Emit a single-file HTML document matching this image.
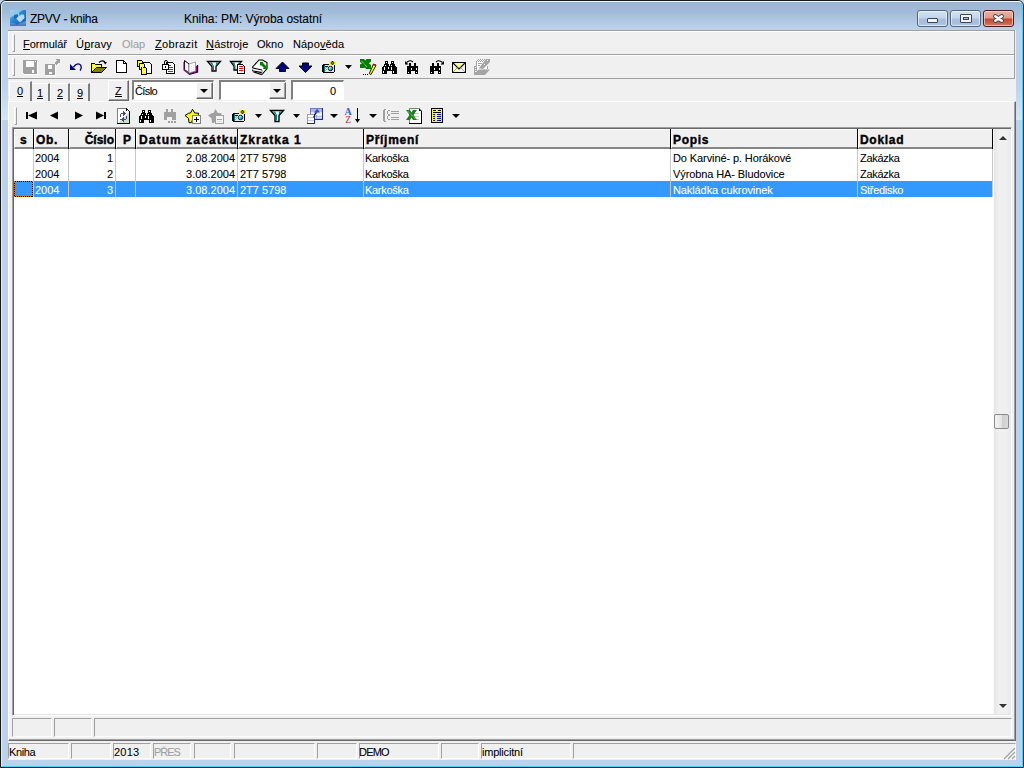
<!DOCTYPE html>
<html><head><meta charset="utf-8">
<style>
*{margin:0;padding:0;box-sizing:border-box}
html,body{width:1024px;height:768px;overflow:hidden;background:#bcd3ec}
body{position:relative;font-family:"Liberation Sans",sans-serif;font-size:11px;color:#000}
.a{position:absolute}
#frame{left:0;top:0;width:1024px;height:768px;border:1px solid #181818;border-radius:6px 6px 0 0;
 background:linear-gradient(#98b3d1 0px,#a3bcd9 12px,#b3cbe5 22px,#bad2ec 29px,#bad2ec 100%)}
#frame2{left:1px;top:1px;width:1022px;height:766px;border-top:1px solid #f4f8fc;border-left:1px solid #e0ebf6;border-right:1px solid #4fd0f2;border-bottom:1px solid #4fd0f2;border-radius:5px 5px 0 0}
#client{left:8px;top:30px;width:1008px;height:730px;background:#f0f0f0}
.t{white-space:nowrap;line-height:1;-webkit-text-stroke:0.08px currentColor}
.band{border:1px solid #a0a0a0;border-left-color:#a0a0a0}
.grip{width:3px;border-left:1px solid #fff;border-top:1px solid #fff;border-right:1px solid #a0a0a0;border-bottom:1px solid #a0a0a0}
u{text-decoration:none;position:relative}u::after{content:"";position:absolute;left:0;right:0;height:1px;background:#000;top:11px}
</style></head><body>
<div id="frame" class="a"></div>
<div id="frame2" class="a"></div>
<div class="a" style="left:2px;top:84px;width:6px;height:36px;background:linear-gradient(#bad2ec,#d6e5f4)"></div>
<div class="a" style="left:1016px;top:84px;width:6px;height:36px;background:linear-gradient(#bad2ec,#d6e5f4)"></div>
<!-- title -->
<div class="a t" style="left:30px;top:13px;font-size:12px;letter-spacing:-0.25px;color:#000">ZPVV - kniha</div>
<div class="a t" style="left:184px;top:13px;font-size:12px;letter-spacing:-0.05px;color:#000">Kniha: PM: Výroba ostatní</div>
<!-- caption buttons -->
<div class="a" style="left:917px;top:10px;width:31px;height:17px;border:1px solid #56657a;border-radius:3px;background:linear-gradient(#d4e2f1 0px,#c3d5ea 7px,#a9c0dc 8px,#a5bede 12px,#bcd2ec 16px);box-shadow:inset 0 0 0 1px rgba(255,255,255,0.55)"></div>
<div class="a" style="left:950px;top:10px;width:31px;height:17px;border:1px solid #56657a;border-radius:3px;background:linear-gradient(#d4e2f1 0px,#c3d5ea 7px,#a9c0dc 8px,#a5bede 12px,#bcd2ec 16px);box-shadow:inset 0 0 0 1px rgba(255,255,255,0.55)"></div>
<div class="a" style="left:983px;top:10px;width:31px;height:17px;border:1px solid #4a1a20;border-radius:3px;background:linear-gradient(#eab0a2 0px,#e29a88 7px,#c4482c 8px,#cc6048 12px,#dc8a72 16px);box-shadow:inset 0 0 0 1px rgba(255,230,220,0.6)"></div>
<div class="a" style="left:927px;top:18px;width:11px;height:5px;border:1px solid #3a4656;border-radius:1px;background:#f4f4f4"></div>
<div class="a" style="left:960px;top:14px;width:12px;height:9px;border:1px solid #3a4656;border-radius:1px;background:#f4f4f4"></div>
<div class="a" style="left:963px;top:17px;width:6px;height:3px;border:1px solid #3a4656;background:#a9c0dc"></div>
<svg class="a" style="left:991px;top:12px" width="16" height="13"><path d="M4.3 4.3 L10.7 8.7 M10.7 4.3 L4.3 8.7" stroke="#3a4656" stroke-width="4.4" stroke-linecap="round"/><path d="M4.3 4.3 L10.7 8.7 M10.7 4.3 L4.3 8.7" stroke="#f8f8f8" stroke-width="2.6" stroke-linecap="round"/></svg>
<div id="client" class="a"></div>
<!-- menu band -->
<div class="a" style="left:8px;top:30px;width:1007px;height:25px;border-top:1px solid #a0a0a0;border-right:1px solid #a0a0a0;border-bottom:1px solid #a0a0a0;box-shadow:inset 1px 1px #fff"></div>
<div class="a" style="left:8px;top:55px;width:1007px;height:24px;border-right:1px solid #a0a0a0;border-bottom:1px solid #a0a0a0;box-shadow:inset 1px 1px #fff"></div>
<div class="a grip" style="left:12px;top:34px;height:18px"></div>
<div class="a grip" style="left:12px;top:58px;height:18px"></div>
<div class="a t" style="left:23px;top:39px;font-size:11px;letter-spacing:0"><u>F</u>ormulář</div>
<div class="a t" style="left:76px;top:39px;font-size:11px;letter-spacing:0.2px">Ú<u>p</u>ravy</div>
<div class="a t" style="left:122px;top:39px;font-size:11px;letter-spacing:0;color:#a0a0a0">Olap</div>
<div class="a t" style="left:155px;top:39px;font-size:11px;letter-spacing:0.35px"><u>Z</u>obrazit</div>
<div class="a t" style="left:206px;top:39px;font-size:11px;letter-spacing:0.2px"><u>N</u>ástroje</div>
<div class="a t" style="left:257px;top:39px;font-size:11px;letter-spacing:0">Okno</div>
<div class="a t" style="left:293px;top:39px;font-size:11px;letter-spacing:0.15px">Nápo<u>v</u>ěda</div>
<!-- tab strip -->
<div class="a" style="left:8px;top:80px;width:1008px;height:21px;"></div>
<div class="a" style="left:9px;top:81px;width:23px;height:21px;border-top:1px solid #fff;border-left:1px solid #fff;border-right:2px solid #808080"></div>
<div class="a" style="left:32px;top:83px;width:18px;height:18px;border-top:1px solid #fff;border-right:2px solid #808080"></div>
<div class="a" style="left:50px;top:83px;width:20px;height:18px;border-top:1px solid #fff;border-left:1px solid #fff;border-right:2px solid #808080"></div>
<div class="a" style="left:70px;top:83px;width:20px;height:18px;border-top:1px solid #fff;border-left:1px solid #fff;border-right:2px solid #808080"></div>
<div class="a t" style="left:17px;top:86px"><u>0</u></div>
<div class="a t" style="left:37px;top:88px"><u>1</u></div>
<div class="a t" style="left:57px;top:88px"><u>2</u></div>
<div class="a t" style="left:77px;top:88px"><u>9</u></div>
<div class="a" style="left:108px;top:80px;width:21px;height:21px;border-top:1px solid #fff;border-left:1px solid #fff;border-right:1px solid #696969;border-bottom:1px solid #696969;box-shadow:inset -1px -1px #a0a0a0"></div>
<div class="a t" style="left:115px;top:86px"><u>Z</u></div>
<div class="a" style="left:132px;top:80px;width:82px;height:20px;border-top:2px solid #808080;border-left:2px solid #808080;border-right:1px solid #fff;border-bottom:1px solid #fff;background:#fff"></div>
<div class="a t" style="left:135px;top:86px;letter-spacing:-0.6px">Číslo</div>
<div class="a" style="left:196px;top:82px;width:17px;height:17px;background:#f0f0f0;border-top:1px solid #fff;border-left:1px solid #fff;border-right:1px solid #696969;border-bottom:1px solid #696969;box-shadow:inset -1px -1px #a0a0a0"></div>
<div class="a" style="left:200px;top:89px;width:0;height:0;border-left:4px solid transparent;border-right:4px solid transparent;border-top:4px solid #000"></div>
<div class="a" style="left:219px;top:80px;width:67px;height:20px;border-top:2px solid #808080;border-left:2px solid #808080;border-right:1px solid #fff;border-bottom:1px solid #fff;background:#fff"></div>
<div class="a" style="left:269px;top:82px;width:17px;height:17px;background:#f0f0f0;border-top:1px solid #fff;border-left:1px solid #fff;border-right:1px solid #696969;border-bottom:1px solid #696969;box-shadow:inset -1px -1px #a0a0a0"></div>
<div class="a" style="left:273px;top:89px;width:0;height:0;border-left:4px solid transparent;border-right:4px solid transparent;border-top:4px solid #000"></div>
<div class="a" style="left:291px;top:80px;width:53px;height:20px;border-top:2px solid #808080;border-left:2px solid #808080;border-right:1px solid #fff;border-bottom:1px solid #fff;background:#fff"></div>
<div class="a t" style="left:330px;top:86px">0</div>
<!-- grid container panel -->
<div class="a" style="left:8px;top:101px;width:1008px;height:640px;border-top:1px solid #fff;border-left:1px solid #fff;border-right:1px solid #696969;border-bottom:1px solid #696969;box-shadow:inset -1px -1px #a0a0a0"></div>
<div class="a grip" style="left:14px;top:107px;height:18px"></div>
<!-- grid -->
<div class="a" style="left:12px;top:127px;width:1000px;height:589px;border-top:1px solid #a0a0a0;border-left:1px solid #a0a0a0;border-right:1px solid #fff;border-bottom:1px solid #fff;background:#fff;box-shadow:inset 1px 1px #696969,inset -1px -1px #e3e3e3"></div>
<div class="a" style="left:14px;top:129px;width:19px;height:20px;background:#f0f0f0;border-top:1px solid #fff;border-left:1px solid #fff;border-bottom:2px solid #868686"></div>
<div class="a" style="left:33px;top:129px;width:1px;height:20px;background:#000"></div>
<div class="a" style="left:34px;top:129px;width:34px;height:20px;background:#f0f0f0;border-top:1px solid #fff;border-left:1px solid #fff;border-bottom:2px solid #868686"></div>
<div class="a" style="left:68px;top:129px;width:1px;height:20px;background:#000"></div>
<div class="a" style="left:69px;top:129px;width:46px;height:20px;background:#f0f0f0;border-top:1px solid #fff;border-left:1px solid #fff;border-bottom:2px solid #868686"></div>
<div class="a" style="left:115px;top:129px;width:1px;height:20px;background:#000"></div>
<div class="a" style="left:116px;top:129px;width:19px;height:20px;background:#f0f0f0;border-top:1px solid #fff;border-left:1px solid #fff;border-bottom:2px solid #868686"></div>
<div class="a" style="left:135px;top:129px;width:1px;height:20px;background:#000"></div>
<div class="a" style="left:136px;top:129px;width:101px;height:20px;background:#f0f0f0;border-top:1px solid #fff;border-left:1px solid #fff;border-bottom:2px solid #868686"></div>
<div class="a" style="left:237px;top:129px;width:1px;height:20px;background:#000"></div>
<div class="a" style="left:238px;top:129px;width:125px;height:20px;background:#f0f0f0;border-top:1px solid #fff;border-left:1px solid #fff;border-bottom:2px solid #868686"></div>
<div class="a" style="left:363px;top:129px;width:1px;height:20px;background:#000"></div>
<div class="a" style="left:364px;top:129px;width:306px;height:20px;background:#f0f0f0;border-top:1px solid #fff;border-left:1px solid #fff;border-bottom:2px solid #868686"></div>
<div class="a" style="left:670px;top:129px;width:1px;height:20px;background:#000"></div>
<div class="a" style="left:671px;top:129px;width:186px;height:20px;background:#f0f0f0;border-top:1px solid #fff;border-left:1px solid #fff;border-bottom:2px solid #868686"></div>
<div class="a" style="left:857px;top:129px;width:1px;height:20px;background:#000"></div>
<div class="a" style="left:858px;top:129px;width:134px;height:20px;background:#f0f0f0;border-top:1px solid #fff;border-left:1px solid #fff;border-bottom:2px solid #868686"></div>
<div class="a" style="left:992px;top:129px;width:1px;height:20px;background:#000"></div>
<div class="a" style="left:33px;top:149px;width:1px;height:48px;background:#c8c8c8"></div>
<div class="a" style="left:68px;top:149px;width:1px;height:48px;background:#c8c8c8"></div>
<div class="a" style="left:115px;top:149px;width:1px;height:48px;background:#c8c8c8"></div>
<div class="a" style="left:135px;top:149px;width:1px;height:48px;background:#c8c8c8"></div>
<div class="a" style="left:237px;top:149px;width:1px;height:48px;background:#c8c8c8"></div>
<div class="a" style="left:363px;top:149px;width:1px;height:48px;background:#c8c8c8"></div>
<div class="a" style="left:670px;top:149px;width:1px;height:48px;background:#c8c8c8"></div>
<div class="a" style="left:857px;top:149px;width:1px;height:48px;background:#c8c8c8"></div>
<div class="a" style="left:992px;top:149px;width:1px;height:48px;background:#c8c8c8"></div>
<div class="a" style="left:34px;top:181px;width:958px;height:16px;background:#3399ff"></div>
<div class="a" style="left:33px;top:181px;width:1px;height:16px;background:#c8c8c8"></div>
<div class="a" style="left:68px;top:181px;width:1px;height:16px;background:#c8c8c8"></div>
<div class="a" style="left:115px;top:181px;width:1px;height:16px;background:#c8c8c8"></div>
<div class="a" style="left:135px;top:181px;width:1px;height:16px;background:#c8c8c8"></div>
<div class="a" style="left:237px;top:181px;width:1px;height:16px;background:#c8c8c8"></div>
<div class="a" style="left:363px;top:181px;width:1px;height:16px;background:#c8c8c8"></div>
<div class="a" style="left:670px;top:181px;width:1px;height:16px;background:#c8c8c8"></div>
<div class="a" style="left:857px;top:181px;width:1px;height:16px;background:#c8c8c8"></div>
<svg class="a" style="left:14px;top:181px" width="19" height="16" shape-rendering="crispEdges"><rect x="0.5" y="0.5" width="18" height="15" fill="#3399ff" stroke="#d87000"/><rect x="0.5" y="0.5" width="18" height="15" fill="none" stroke="#000" stroke-dasharray="1 1"/></svg>
<div class="a t" style="left:20px;top:134px;font-weight:bold;font-size:12px;-webkit-text-stroke:0.4px #000;letter-spacing:0.7px">s</div>
<div class="a t" style="left:36px;top:134px;font-weight:bold;font-size:12px;-webkit-text-stroke:0.4px #000;letter-spacing:0.7px">Ob.</div>
<div class="a t" style="right:910px;top:134px;font-weight:bold;font-size:12px;-webkit-text-stroke:0.4px #000;letter-spacing:0px">Číslo</div>
<div class="a t" style="left:123px;top:134px;font-weight:bold;font-size:12px;-webkit-text-stroke:0.4px #000;letter-spacing:0.7px">P</div>
<div class="a t" style="left:139px;top:134px;font-weight:bold;font-size:12px;-webkit-text-stroke:0.4px #000;letter-spacing:1.1px">Datum začátku</div>
<div class="a t" style="left:240px;top:134px;font-weight:bold;font-size:12px;-webkit-text-stroke:0.4px #000;letter-spacing:1px">Zkratka 1</div>
<div class="a t" style="left:366px;top:134px;font-weight:bold;font-size:12px;-webkit-text-stroke:0.4px #000;letter-spacing:0.7px">Příjmení</div>
<div class="a t" style="left:673px;top:134px;font-weight:bold;font-size:12px;-webkit-text-stroke:0.4px #000;letter-spacing:0.7px">Popis</div>
<div class="a t" style="left:860px;top:134px;font-weight:bold;font-size:12px;-webkit-text-stroke:0.4px #000;letter-spacing:0.7px">Doklad</div>
<div class="a t" style="left:35px;top:153px;color:#000">2004</div>
<div class="a t" style="right:911px;top:153px;color:#000">1</div>
<div class="a t" style="right:789px;top:153px;color:#000">2.08.2004</div>
<div class="a t" style="left:240px;top:153px;color:#000">2T7 5798</div>
<div class="a t" style="left:365px;top:153px;color:#000;letter-spacing:-0.3px">Karkoška</div>
<div class="a t" style="left:673px;top:153px;color:#000;letter-spacing:-0.1px">Do Karviné- p. Horákové</div>
<div class="a t" style="left:860px;top:153px;color:#000;letter-spacing:-0.3px">Zakázka</div>
<div class="a t" style="left:35px;top:169px;color:#000">2004</div>
<div class="a t" style="right:911px;top:169px;color:#000">2</div>
<div class="a t" style="right:789px;top:169px;color:#000">3.08.2004</div>
<div class="a t" style="left:240px;top:169px;color:#000">2T7 5798</div>
<div class="a t" style="left:365px;top:169px;color:#000;letter-spacing:-0.3px">Karkoška</div>
<div class="a t" style="left:673px;top:169px;color:#000;letter-spacing:-0.1px">Výrobna HA- Bludovice</div>
<div class="a t" style="left:860px;top:169px;color:#000;letter-spacing:-0.3px">Zakázka</div>
<div class="a t" style="left:35px;top:185px;color:#fff">2004</div>
<div class="a t" style="right:911px;top:185px;color:#fff">3</div>
<div class="a t" style="right:789px;top:185px;color:#fff">3.08.2004</div>
<div class="a t" style="left:240px;top:185px;color:#fff">2T7 5798</div>
<div class="a t" style="left:365px;top:185px;color:#fff;letter-spacing:-0.3px">Karkoška</div>
<div class="a t" style="left:673px;top:185px;color:#fff;letter-spacing:-0.1px">Nakládka cukrovinek</div>
<div class="a t" style="left:860px;top:185px;color:#fff;letter-spacing:-0.3px">Středisko</div>
<div class="a" style="left:993px;top:129px;width:18px;height:585px;background:linear-gradient(90deg,#e6e6e6,#f0f0f0 30%,#f0f0f0 70%,#e8e8e8);border-left:1px solid #fafafa"></div>
<div class="a" style="left:999px;top:136px;width:0;height:0;border-left:4px solid transparent;border-right:4px solid transparent;border-bottom:4px solid #333"></div>
<div class="a" style="left:999px;top:704px;width:0;height:0;border-left:4px solid transparent;border-right:4px solid transparent;border-top:4px solid #333"></div>
<div class="a" style="left:994px;top:414px;width:15px;height:15px;border:1px solid #8a8a8a;border-radius:2px;background:linear-gradient(90deg,#f4f4f4,#e4e4e4 50%,#cfcfcf 55%,#dadada)"></div>
<!-- bottom boxes -->
<div class="a" style="left:12px;top:718px;width:40px;height:19px;border-top:1px solid #a0a0a0;border-left:1px solid #a0a0a0;border-right:1px solid #fff;border-bottom:1px solid #fff"></div>
<div class="a" style="left:54px;top:718px;width:38px;height:19px;border-top:1px solid #a0a0a0;border-left:1px solid #a0a0a0;border-right:1px solid #fff;border-bottom:1px solid #fff"></div>
<div class="a" style="left:94px;top:718px;width:918px;height:19px;border-top:1px solid #a0a0a0;border-left:1px solid #a0a0a0;border-right:1px solid #fff;border-bottom:1px solid #fff"></div>
<!-- status bar -->
<div class="a" style="left:8px;top:741px;width:1007px;height:2px;background:#f0f0f0"></div>
<div class="a" style="left:8px;top:743px;width:61px;height:16px;border-top:1px solid #a0a0a0;border-left:1px solid #a0a0a0;border-right:1px solid #fff;border-bottom:1px solid #fff"></div>
<div class="a t" style="left:9px;top:747px;color:#000;letter-spacing:-0.4px">Kniha</div>
<div class="a" style="left:71px;top:743px;width:40px;height:16px;border-top:1px solid #a0a0a0;border-left:1px solid #a0a0a0;border-right:1px solid #fff;border-bottom:1px solid #fff"></div>
<div class="a" style="left:113px;top:743px;width:38px;height:16px;border-top:1px solid #a0a0a0;border-left:1px solid #a0a0a0;border-right:1px solid #fff;border-bottom:1px solid #fff"></div>
<div class="a t" style="left:114px;top:747px;color:#000;letter-spacing:0.2px">2013</div>
<div class="a" style="left:153px;top:743px;width:38px;height:16px;border-top:1px solid #a0a0a0;border-left:1px solid #a0a0a0;border-right:1px solid #fff;border-bottom:1px solid #fff"></div>
<div class="a t" style="left:154px;top:747px;color:#a0a0a0;letter-spacing:-1px">PŘES</div>
<div class="a" style="left:194px;top:743px;width:37px;height:16px;border-top:1px solid #a0a0a0;border-left:1px solid #a0a0a0;border-right:1px solid #fff;border-bottom:1px solid #fff"></div>
<div class="a" style="left:234px;top:743px;width:81px;height:16px;border-top:1px solid #a0a0a0;border-left:1px solid #a0a0a0;border-right:1px solid #fff;border-bottom:1px solid #fff"></div>
<div class="a" style="left:317px;top:743px;width:40px;height:16px;border-top:1px solid #a0a0a0;border-left:1px solid #a0a0a0;border-right:1px solid #fff;border-bottom:1px solid #fff"></div>
<div class="a" style="left:359px;top:743px;width:80px;height:16px;border-top:1px solid #a0a0a0;border-left:1px solid #a0a0a0;border-right:1px solid #fff;border-bottom:1px solid #fff"></div>
<div class="a t" style="left:359px;top:747px;color:#000;letter-spacing:-0.8px">DEMO</div>
<div class="a" style="left:441px;top:743px;width:38px;height:16px;border-top:1px solid #a0a0a0;border-left:1px solid #a0a0a0;border-right:1px solid #fff;border-bottom:1px solid #fff"></div>
<div class="a" style="left:481px;top:743px;width:90px;height:16px;border-top:1px solid #a0a0a0;border-left:1px solid #a0a0a0;border-right:1px solid #fff;border-bottom:1px solid #fff"></div>
<div class="a t" style="left:482px;top:747px;color:#000;letter-spacing:-0.2px">implicitní</div>
<div class="a" style="left:573px;top:743px;width:443px;height:16px;border-top:1px solid #a0a0a0;border-left:1px solid #a0a0a0;border-right:1px solid #fff;border-bottom:1px solid #fff"></div>
<svg class="a" style="left:1003px;top:748px" width="13" height="12"><g stroke="#a0a0a0" stroke-width="1.2"><line x1="12" y1="0" x2="1" y2="11"/><line x1="12" y1="4" x2="5" y2="11"/><line x1="12" y1="8" x2="9" y2="11"/></g><g stroke="#fff" stroke-width="1"><line x1="13" y1="1" x2="2" y2="12"/><line x1="13" y1="5" x2="6" y2="12"/><line x1="13" y1="9" x2="10" y2="12"/></g></svg>


<!--ICONS-->
<svg class="a" style="left:0;top:0" width="1024" height="768" shape-rendering="crispEdges">
<!-- save disabled -->
<g>
<rect x="24" y="61" width="14" height="14" fill="#fff"/>
<rect x="23" y="60" width="14" height="14" fill="#a0a0a0"/>
<rect x="23" y="73" width="1" height="1" fill="#f0f0f0"/>
<rect x="26" y="61" width="8" height="6" fill="#fff"/>
<rect x="35" y="61" width="1" height="1" fill="#fff"/>
<rect x="32" y="70" width="2" height="3" fill="#fff"/>
</g>
<!-- save as disabled -->
<g>
<rect x="46" y="65" width="10" height="11" fill="#fff"/>
<rect x="45" y="64" width="10" height="11" fill="#a0a0a0"/>
<rect x="48" y="65" width="4" height="4" fill="#fff"/>
<rect x="49" y="72" width="3" height="2" fill="#fff"/>
<polygon points="55,59 60,59 60,64" fill="#a0a0a0"/>
<polygon points="54,63 57,60 59,62 56,65" fill="#a0a0a0"/>
</g>
<!-- undo -->
<g shape-rendering="auto">
<polygon points="70,64 70,70 76,70" fill="#000080"/>
<path d="M73.5 67 Q77 62.5 80 64.5 Q82.5 67 80 70.5" fill="none" stroke="#000080" stroke-width="1.3"/>
</g>
<!-- open folder -->
<g>
<polygon points="91.5,72.5 91.5,63.5 94.5,63.5 95.5,64.5 101.5,64.5 101.5,67" fill="#ffff00" stroke="#000" stroke-width="1"/>
<rect x="93" y="65" width="2" height="2" fill="#fff"/>
<polygon points="91.5,72.5 96.5,67.5 106.5,67.5 101.5,72.5" fill="#808000" stroke="#000" stroke-width="1" shape-rendering="auto"/>
<path d="M99 62.5 Q102 59.5 105 62" fill="none" stroke="#000" stroke-width="1.2" shape-rendering="auto"/>
<polygon points="103.5,62 107,62 105.2,64.5" fill="#000" shape-rendering="auto"/>
</g>
<!-- new doc -->
<polygon points="116.5,60.5 123.5,60.5 126.5,63.5 126.5,72.5 116.5,72.5" fill="#fff" stroke="#000" stroke-width="1"/>
<polyline points="123.5,60.5 123.5,63.5 126.5,63.5" fill="none" stroke="#000"/>
<!-- copy docs -->
<g>
<polygon points="143.5,62.5 149.5,62.5 151.5,64.5 151.5,73.5 143.5,73.5" fill="#fff" stroke="#000"/>
<polygon points="137.5,60.5 141.5,60.5 142.5,61.5 142.5,66.5 137.5,66.5" fill="#ffff00" stroke="#000"/>
<polygon points="139.5,63.5 143.5,63.5 144.5,64.5 144.5,69.5 139.5,69.5" fill="#ffff00" stroke="#000"/>
<polygon points="141.5,67.5 145.5,67.5 146.5,68.5 146.5,74.5 141.5,74.5" fill="#ffff00" stroke="#000"/>
<rect x="139" y="62" width="1" height="1" fill="#fff"/><rect x="138" y="63" width="1" height="1" fill="#fff"/><rect x="140" y="64" width="1" height="1" fill="#fff"/>
<rect x="141" y="65" width="1" height="1" fill="#fff"/><rect x="140" y="66" width="1" height="1" fill="#fff"/><rect x="142" y="67" width="1" height="1" fill="#fff"/>
<rect x="143" y="69" width="1" height="1" fill="#fff"/><rect x="142" y="70" width="1" height="1" fill="#fff"/><rect x="144" y="71" width="1" height="1" fill="#fff"/><rect x="143" y="72" width="1" height="1" fill="#fff"/><rect x="145" y="72" width="1" height="1" fill="#fff"/>
</g>
<!-- lock doc -->
<g>
<polygon points="166.5,62.5 172.5,62.5 174.5,64.5 174.5,73.5 166.5,73.5" fill="#fff" stroke="#000"/>
<rect x="168" y="65" width="3" height="1" fill="#f00"/>
<rect x="168" y="67" width="5" height="1" fill="#f00"/>
<rect x="168" y="69" width="5" height="1" fill="#f00"/>
<rect x="168" y="71" width="5" height="1" fill="#f00"/>
<path d="M164.5 64.5 V62 Q164.5 60.5 166 60.5 Q167.5 60.5 167.5 62 V64.5" fill="none" stroke="#000" stroke-width="1" shape-rendering="auto"/>
<rect x="162.5" y="64.5" width="6" height="5" fill="#fff" stroke="#000"/>
<rect x="165" y="66" width="1" height="2" fill="#000"/>
</g>
<!-- book -->
<g shape-rendering="auto">
<polygon points="184.5,60.5 189,64 189,73 184.5,69.5" fill="#fff" stroke="#000" stroke-width="1"/>
<polygon points="189,64 195.5,62 195.5,71 189,73" fill="#fff" stroke="#a0a0a0" stroke-width="1"/>
<polyline points="197.5,65 197.5,72 189,74.5" fill="none" stroke="#000" stroke-width="1.3"/>
<polyline points="184,62 184,70 188.8,74 196.5,71.5 196.5,66" fill="none" stroke="#800080" stroke-width="1.1"/>
</g>
<rect x="191" y="66" width="1" height="1" fill="#ff0"/><rect x="193" y="65" width="1" height="1" fill="#ff0"/>
<rect x="191" y="68" width="1" height="1" fill="#ff0"/><rect x="193" y="67" width="1" height="1" fill="#ff0"/>
<rect x="191" y="70" width="1" height="1" fill="#ff0"/><rect x="193" y="69" width="1" height="1" fill="#ff0"/>
<!-- filter -->
<g shape-rendering="auto">
<polygon points="207.5,61.5 220.5,61.5 216,66.5 216,71 212,71 212,66.5" fill="#fff" stroke="#000" stroke-width="1.3"/>
<polygon points="209.5,62.5 212,62.5 214,66 214,70 213,70 213,66" fill="#008080"/>
<polygon points="216,62.5 219,62.5 215.5,66 215.5,70 215,70" fill="#008080"/>
</g>
<!-- filter doc -->
<g shape-rendering="auto">
<polygon points="230.5,61.5 241.5,61.5 237.5,66 237.5,70 234,70 234,66" fill="#fff" stroke="#000" stroke-width="1.3"/>
<polygon points="232,62.5 234.5,62.5 235.5,66 235.5,69 234.8,69 234.8,66" fill="#008080"/>
<polygon points="238.5,62.5 240.5,62.5 237,66 237,69" fill="#008080"/>
</g>
<polygon points="237.5,64.5 242.5,64.5 244.5,66.5 244.5,73.5 237.5,73.5" fill="#fff" stroke="#000"/>
<rect x="239" y="66" width="4" height="1" fill="#f00"/><rect x="239" y="68" width="4" height="1" fill="#f00"/><rect x="239" y="70" width="4" height="1" fill="#f00"/>
<!-- stack with green arrow -->
<g shape-rendering="auto">
<polygon points="252.5,67 259,60 262.5,60 267,62.5 267,68.5 262,74.5 252.5,71.5" fill="#fff"/>
<polyline points="252.5,67 259,60 262.5,60 267,62.5 267,68.5 262,74.5" fill="none" stroke="#000" stroke-width="1.1"/>
<polyline points="252.5,66.8 253,68 262,70" fill="none" stroke="#000" stroke-width="1.1"/>
<polyline points="252.5,69.6 253,71 262,72.6" fill="none" stroke="#000" stroke-width="1.1"/>
<polyline points="253.5,72 262,74.6" fill="none" stroke="#000" stroke-width="1.1"/>
<line x1="262" y1="70" x2="262" y2="74.5" stroke="#808080" stroke-width="0.9"/>
<rect x="260" y="62" width="3.2" height="3.4" fill="#008000"/>
<line x1="261.5" y1="63.5" x2="265" y2="67" stroke="#008000" stroke-width="2.6"/>
<polygon points="266.8,64.8 266.8,69 262.6,69" fill="#008000"/>
</g>
<!-- up arrow -->
<polygon points="282.5,62 289,68.5 285.5,68.5 285.5,71.5 279.5,71.5 279.5,68.5 276,68.5" fill="#000080" stroke="#000" stroke-width="1" shape-rendering="auto"/>
<!-- down arrow -->
<polygon points="302.5,63 308.5,63 308.5,66 312,66 305.5,72.5 299,66 302.5,66" fill="#000080" stroke="#000" stroke-width="1" shape-rendering="auto"/>
<!-- camera -->
<use href="#cam" x="322" y="61"/>
<polygon points="345,65 352,65 348.5,69" fill="#000" shape-rendering="auto"/>
<!-- excel X pencil -->
<g shape-rendering="auto">
<polygon points="360,59 364,59 365.2,60.5 366.5,59 371,59 371,61.5 368.8,63.5 371,65 371,69 366,69 365,67.5 364,68 360,68 360,64.5 362,63.2 360,62" fill="#008000"/>
<line x1="361.5" y1="61" x2="367.5" y2="67.5" stroke="#fff" stroke-width="0.8" stroke-dasharray="1,0.8"/>
<polygon points="373.5,64 376,65.5 371,74.5 369.3,73.5" fill="#ff0" stroke="#000" stroke-width="0.9"/>
<rect x="373.3" y="64" width="2.4" height="1.6" fill="#c00000"/>
</g>
<rect x="363" y="74" width="1" height="1" fill="#000"/><rect x="365" y="74" width="1" height="1" fill="#000"/><rect x="367" y="74" width="1" height="1" fill="#000"/>
</svg>
<svg class="a" style="left:0;top:0" width="1024" height="768" shape-rendering="crispEdges">
<defs>
<g id="bino">
<rect x="3" y="0" width="3" height="3" fill="#000"/><rect x="9" y="0" width="3" height="3" fill="#000"/>
<rect x="2" y="3" width="5" height="2" fill="#000"/><rect x="8" y="3" width="5" height="2" fill="#000"/>
<rect x="1" y="5" width="13" height="1" fill="#000"/>
<rect x="0" y="6" width="15" height="4" fill="#000"/>
<rect x="0" y="10" width="5" height="3" fill="#000"/><rect x="10" y="10" width="5" height="3" fill="#000"/>
<rect x="4" y="1" width="1" height="1" fill="#fff"/><rect x="10" y="1" width="1" height="1" fill="#fff"/>
<rect x="3" y="4" width="1" height="1" fill="#fff"/><rect x="9" y="4" width="1" height="1" fill="#fff"/>
<rect x="2" y="6" width="1" height="3" fill="#fff"/><rect x="6" y="6" width="1" height="2" fill="#fff"/><rect x="9" y="6" width="1" height="3" fill="#fff"/>
<rect x="1" y="10" width="1" height="2" fill="#fff"/><rect x="11" y="10" width="1" height="2" fill="#fff"/>
</g>
<linearGradient id="lensg" x1="0" y1="0" x2="1" y2="1"><stop offset="0.2" stop-color="#fff"/><stop offset="0.55" stop-color="#00e0ff"/><stop offset="1" stop-color="#0000ff"/></linearGradient>
<g id="cam">
<rect x="1" y="3" width="11" height="9" fill="#000"/>
<rect x="0" y="4" width="13" height="7" fill="#000"/>
<rect x="2" y="4" width="1" height="7" fill="#008080"/>
<rect x="3" y="4" width="9" height="7" fill="#e8e4d8"/>
<rect x="3" y="5" width="1" height="1" fill="#a0a0a0"/><rect x="4" y="6" width="1" height="1" fill="#a0a0a0"/><rect x="3" y="7" width="1" height="1" fill="#a0a0a0"/><rect x="4" y="8" width="1" height="1" fill="#a0a0a0"/><rect x="3" y="9" width="1" height="1" fill="#a0a0a0"/>
<rect x="3" y="5" width="3" height="1" fill="#000"/>
<circle cx="8.5" cy="7.5" r="2.2" fill="url(#lensg)" stroke="#000" stroke-width="0.9" shape-rendering="auto"/>
<rect x="7" y="0" width="7" height="4" fill="#ffff00"/>
<circle cx="10.5" cy="2" r="1.4" fill="none" stroke="#000" stroke-width="0.8" shape-rendering="auto"/>
<rect x="10" y="0" width="1" height="4" fill="#000" opacity="0.5"/>
</g>
<g id="binos">
<rect x="2" y="0" width="2" height="3" fill="#000"/><rect x="7" y="0" width="2" height="3" fill="#000"/>
<rect x="0" y="3" width="11" height="5" fill="#000"/>
<rect x="0" y="8" width="4" height="3" fill="#000"/><rect x="8" y="8" width="3" height="3" fill="#000"/>
<rect x="4" y="5" width="1" height="2" fill="#fff"/><rect x="9" y="5" width="1" height="2" fill="#fff"/>
<rect x="1" y="9" width="1" height="1" fill="#fff"/><rect x="9" y="9" width="1" height="1" fill="#fff"/>
</g>
</defs>
<use href="#bino" x="382" y="61"/>
<use href="#binos" x="407" y="63"/>
<path d="M413 62 Q410 59.3 406.5 62.5" fill="none" stroke="#000" stroke-width="1.1" shape-rendering="auto"/>
<polygon points="405,61 405,64.5 408.5,64.5" fill="#000" shape-rendering="auto"/>
<use href="#binos" x="430" y="63"/>
<path d="M436 62 Q439 59.3 442.5 62.5" fill="none" stroke="#000" stroke-width="1.1" shape-rendering="auto"/>
<polygon points="444,61 444,64.5 440.5,64.5" fill="#000" shape-rendering="auto"/>
<!-- envelope -->
<rect x="452.5" y="62.5" width="13" height="10" fill="#f4f4f4" stroke="#000"/>
<rect x="452" y="72" width="14" height="1" fill="#000"/>
<polygon points="453,63 465,63 459,69" fill="#ffff80" shape-rendering="auto"/>
<polyline points="453,63 459,69 465,63" fill="none" stroke="#000" stroke-width="1.1" shape-rendering="auto"/>
<polyline points="453,72 457.5,67.5" stroke="#a0a000" stroke-width="0.8" shape-rendering="auto"/>
<polyline points="465,72 460.5,67.5" stroke="#a0a000" stroke-width="0.8" shape-rendering="auto"/>
<!-- gray notepad -->
<polygon points="477,62 485,62 480,68 477,70" fill="#fff"/><rect x="482" y="66" width="5" height="3" fill="#fff"/>
<g fill="#a4a4a4">
<rect x="474" y="66" width="2" height="9"/>
<rect x="476" y="61" width="1" height="10"/>
<rect x="478" y="59" width="1" height="1"/><rect x="480" y="59" width="1" height="1"/><rect x="482" y="59" width="1" height="1"/><rect x="484" y="59" width="1" height="1"/>
<rect x="477" y="60" width="1" height="1"/><rect x="479" y="60" width="1" height="1"/><rect x="481" y="60" width="1" height="1"/><rect x="483" y="60" width="1" height="1"/>
<rect x="478" y="61" width="1" height="1"/><rect x="480" y="61" width="1" height="1"/><rect x="482" y="61" width="1" height="1"/>
<rect x="478" y="63" width="4" height="1"/><rect x="478" y="65" width="2" height="1"/>
<polygon points="479,68 486,59 490,59 490,62 483,69" shape-rendering="auto"/>
<polygon points="474,75 485,75 490,69.5 479,69.5 476,72 474,72" shape-rendering="auto"/>
<rect x="487" y="66" width="1" height="3"/>
</g>
<rect x="475" y="67" width="1" height="1" fill="#fff"/><rect x="475" y="69" width="1" height="1" fill="#fff"/><rect x="475" y="71" width="1" height="1" fill="#fff"/>
<rect x="487" y="60" width="1" height="1" fill="#fff"/><rect x="484" y="64" width="1" height="1" fill="#fff"/>
<!-- NAV TOOLBAR -->
<rect x="26" y="112" width="2" height="7" fill="#000"/>
<polygon points="28,115.5 37,111.5 37,119.5" fill="#000" shape-rendering="auto"/>
<polygon points="50,115.5 58,111.5 58,119.5" fill="#000" shape-rendering="auto"/>
<polygon points="75,111.5 83,115.5 75,119.5" fill="#000" shape-rendering="auto"/>
<polygon points="96,111.5 104,115.5 96,119.5" fill="#000" shape-rendering="auto"/>
<rect x="104" y="112" width="2" height="7" fill="#000"/>
<!-- refresh doc -->
<rect x="117" y="108" width="13" height="16" fill="#fff"/>
<polygon points="118,123 129,123 129,112" fill="#c8e4c8"/>
<rect x="117" y="108" width="9" height="1" fill="#808080"/><rect x="117" y="108" width="1" height="15" fill="#808080"/>
<rect x="117" y="123" width="13" height="1" fill="#000"/><rect x="129" y="111" width="1" height="13" fill="#000"/>
<polygon points="126,108 126,111 129,111" fill="#000"/><rect x="127" y="110" width="1" height="1" fill="#fff"/>
<g fill="#4a4a80">
<rect x="121" y="113" width="3" height="1"/><rect x="120" y="114" width="1" height="3"/>
<polygon points="123,111 126.5,113.5 123,116"/>
<rect x="123" y="119" width="3" height="1"/><rect x="126" y="116" width="1" height="3"/>
<polygon points="124,117 120.5,119.5 124,122"/>
</g>
<use href="#bino" x="139" y="110"/>
<!-- gray binoculars -->
<g fill="#a0a0a0">
<rect x="166" y="109" width="2" height="3"/><rect x="171" y="109" width="2" height="3"/>
<rect x="164" y="112" width="12" height="8"/>
</g>
<rect x="167" y="117" width="5" height="3" fill="#f0f0f0"/>
<rect x="168" y="121" width="2" height="2" fill="#a0a0a0"/><rect x="171" y="121" width="2" height="2" fill="#a0a0a0"/><rect x="174" y="121" width="2" height="2" fill="#a0a0a0"/>
<!-- star plus -->
<polygon points="192.5,109.3 194.8,113 198.6,113.2 198,116 193.5,117.5 191.3,122.7 189,122.7 188.5,118.3 185,115.5 188.5,113.3 190.5,113" fill="#ffff00" stroke="#000" stroke-width="1" shape-rendering="auto"/>
<rect x="192.5" y="115.5" width="8" height="8" fill="#fff" stroke="#808080"/>
<rect x="194" y="119" width="5" height="1" fill="#000"/><rect x="196" y="117" width="1" height="5" fill="#000"/>
<!-- gray star minus -->
<polygon points="215.5,109 217.8,113 221.6,113.2 221,116 216.5,117.5 214.3,123 212,123 211.5,118.3 208,115.5 211.5,113.3 213.5,113" fill="#a0a0a0" shape-rendering="auto"/>
<rect x="215.5" y="115.5" width="8" height="8" fill="#f4f4f4" stroke="#a0a0a0"/>
<rect x="217" y="119" width="5" height="1" fill="#a0a0a0"/><rect x="217" y="121" width="5" height="1" fill="#e0e0e0"/>
<!-- camera nav -->
<use href="#cam" x="232" y="110"/>
<polygon points="255,114 262,114 258.5,118" fill="#000" shape-rendering="auto"/>
<!-- filter nav -->
<g shape-rendering="auto">
<polygon points="270.5,110.5 283.5,110.5 279,115.5 279,121.5 275,121.5 275,115.5" fill="#fff" stroke="#000" stroke-width="1.4"/>
<polygon points="272.5,111.5 275,111.5 277,115 277,120.5 276,120.5 276,115" fill="#008080"/>
<polygon points="279,111.5 282,111.5 278.5,115 278.5,120.5 278,120.5" fill="#008080"/>
</g>
<polygon points="293,114 300,114 296.5,118" fill="#000" shape-rendering="auto"/>
<!-- table icon -->
<rect x="310" y="108" width="13" height="12" fill="#dfe8fb"/>
<rect x="310" y="108" width="13" height="1" fill="#6f7fc0"/><rect x="310" y="108" width="1" height="12" fill="#6f7fc0"/>
<rect x="311" y="109" width="11" height="3" fill="#b4b4d4"/>
<rect x="322" y="108" width="1" height="12" fill="#28287c"/><rect x="310" y="119" width="13" height="1" fill="#28287c"/>
<rect x="316" y="112" width="1" height="7" fill="#90a8e0"/>
<rect x="311" y="114" width="11" height="1" fill="#ffffff"/><rect x="311" y="116" width="11" height="1" fill="#a8c0f0"/><rect x="311" y="118" width="11" height="1" fill="#a8c0f0"/>
<rect x="307" y="114" width="8" height="10" fill="#fff"/>
<rect x="307" y="114" width="1" height="10" fill="#a0a0a0"/><rect x="307" y="114" width="8" height="1" fill="#a0a0a0"/>
<rect x="307" y="123" width="8" height="1" fill="#28287c"/><rect x="314" y="114" width="1" height="10" fill="#28287c"/>
<rect x="308" y="117" width="6" height="1" fill="#b8c8f0"/><rect x="308" y="120" width="6" height="1" fill="#b8c8f0"/>
<g shape-rendering="auto">
<line x1="313.5" y1="117.5" x2="316.8" y2="111" stroke="#1a1a60" stroke-width="1.3"/>
<polygon points="314,112.5 317.2,108.8 320,112.5" fill="#3a50c0"/>
</g>
<polygon points="330,114 338,114 334,118" fill="#000" shape-rendering="auto"/>
<!-- AZ sort -->
<text x="344.6" y="115.2" font-family="Liberation Serif" font-weight="bold" font-size="10" fill="#3a5cc8" shape-rendering="auto">A</text>
<text x="345.2" y="122.8" font-family="Liberation Serif" font-size="9.5" fill="#b03a3a">Z</text>
<rect x="357" y="108" width="1" height="14" fill="#000"/>
<polygon points="355,119 360,119 357.5,123" fill="#000" shape-rendering="auto"/>
<polygon points="369,114 377,114 373,118" fill="#000" shape-rendering="auto"/>
<!-- gray tree list -->
<g fill="#a0a0a0">
<rect x="383" y="110" width="2" height="11"/><rect x="384" y="109" width="2" height="1"/><rect x="384" y="121" width="2" height="1"/>
<rect x="387" y="111" width="1" height="3"/><rect x="388" y="110" width="2" height="1"/><rect x="388" y="114" width="2" height="1"/>
<rect x="387" y="116" width="1" height="3"/><rect x="388" y="115" width="2" height="1"/><rect x="388" y="119" width="2" height="1"/>
<rect x="391" y="111" width="8" height="1"/><rect x="391" y="113" width="8" height="1"/><rect x="391" y="117" width="8" height="1"/><rect x="391" y="119" width="8" height="1"/>
</g>
<!-- excel doc -->
<rect x="409" y="108" width="13" height="16" fill="#fff"/>
<rect x="409" y="108" width="10" height="1" fill="#808080"/><rect x="409" y="108" width="1" height="15" fill="#808080"/>
<rect x="409" y="123" width="13" height="1" fill="#000"/><rect x="421" y="111" width="1" height="13" fill="#000"/>
<polygon points="419,108 422,111 419,111" fill="#000" shape-rendering="auto"/>
<rect x="413" y="113" width="6" height="1" fill="#c8c8c8"/><rect x="413" y="116" width="6" height="1" fill="#c8c8c8"/><rect x="413" y="119" width="6" height="1" fill="#c8c8c8"/>
<defs><pattern id="chk" width="2" height="2" patternUnits="userSpaceOnUse"><rect width="1" height="1" fill="#008000"/><rect x="1" y="1" width="1" height="1" fill="#008000"/><rect x="1" y="0" width="1" height="1" fill="#fff"/><rect x="0" y="1" width="1" height="1" fill="#fff"/></pattern></defs>
<g shape-rendering="auto">
<polygon points="406,110 410,110 411.5,112.5 413,110 417,110 413.5,115 417,120 413,120 411.5,117.5 410,120 406,120 409.5,115" fill="#1a801a"/><line x1="407.5" y1="111" x2="415.5" y2="119" stroke="#fff" stroke-width="0.7" stroke-dasharray="1 1"/>
</g>
<!-- yellow table -->
<rect x="431" y="108" width="12" height="15" fill="#000"/>
<rect x="432" y="109" width="10" height="13" fill="#ffff00"/>
<rect x="433" y="110" width="3" height="1" fill="#000"/><rect x="438" y="110" width="3" height="1" fill="#000"/>
<rect x="433" y="112" width="8" height="1" fill="#000"/>
<rect x="433" y="114" width="2" height="1" fill="#0000ff"/><rect x="437" y="114" width="4" height="1" fill="#0000ff"/>
<rect x="433" y="116" width="2" height="1" fill="#0000ff"/><rect x="437" y="116" width="4" height="1" fill="#0000ff"/>
<rect x="433" y="118" width="2" height="1" fill="#0000ff"/><rect x="437" y="118" width="4" height="1" fill="#0000ff"/>
<rect x="433" y="120" width="2" height="1" fill="#0000ff"/><rect x="437" y="120" width="4" height="1" fill="#0000ff"/>
<polygon points="452,114 460,114 456,118" fill="#000" shape-rendering="auto"/>
<!-- title icon -->
<defs><linearGradient id="tig" x1="0" y1="0" x2="1" y2="1"><stop offset="0" stop-color="#7cc0ee"/><stop offset="0.45" stop-color="#2a82cc"/><stop offset="1" stop-color="#0e5aa8"/></linearGradient>
<linearGradient id="tib" x1="0" y1="0" x2="0" y2="1"><stop offset="0" stop-color="#6aa0d8"/><stop offset="1" stop-color="#4a70b8"/></linearGradient></defs>
<g shape-rendering="auto">
<rect x="10" y="10" width="16" height="16" fill="url(#tig)"/>
<polygon points="10,10 23,10 19,12.5 18,15 13,16 10,18" fill="#a8d4f2" opacity="0.75"/>
<polygon points="13.5,16 17.5,14 19,13 19.5,16 21,14.5 24,14.5 24.5,18 20,22.5 16.5,19" fill="#b4dcf6"/>
<polygon points="14,15 18,14 18.5,16 16,19 14,18" fill="#1a68b8"/>
<polygon points="10,23 14,23 16,25 22,22.5 26,21 26,26 10,26" fill="url(#tib)"/>
</g>
</svg>
<!--/ICONS-->
</body></html>
